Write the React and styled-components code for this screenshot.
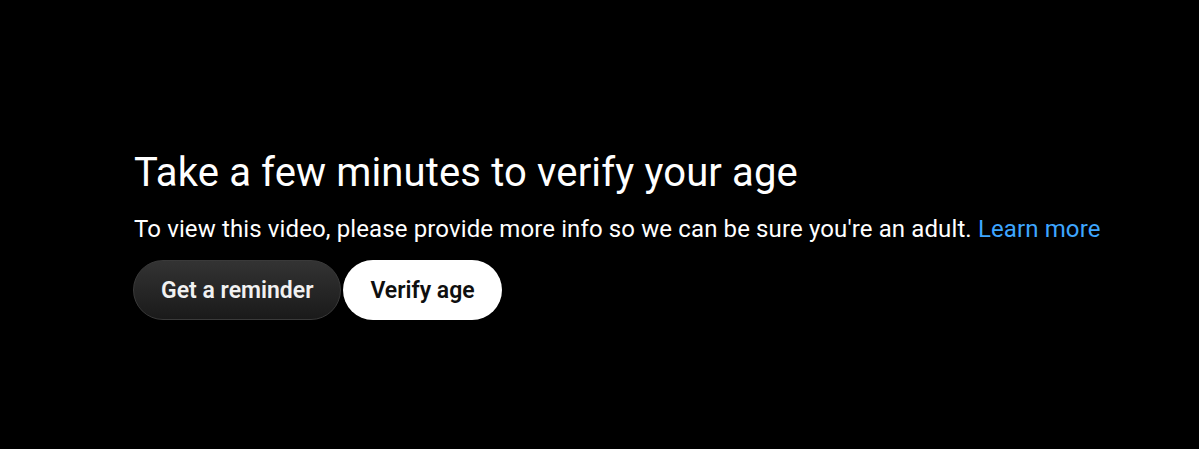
import styled, { createGlobalStyle } from "styled-components";

const GlobalStyle = createGlobalStyle`
  html, body {
    margin: 0;
    background: #000;
  }
  body {
    font-family: Roboto, "Liberation Sans", Arial, sans-serif;
  }
`;

const Screen = styled.div`
  width: 1199px;
  height: 449px;
  background: #000;
  display: flex;
  flex-direction: column;
  padding: 149px 0 0 134px;
  box-sizing: border-box;
`;

const Title = styled.h1`
  margin: 0 0 16px;
  font-size: 40px;
  font-weight: 400;
  line-height: 48px;
  letter-spacing: 0.14px;
  color: #fff;
`;

const Message = styled.p`
  margin: 0 0 15px;
  font-size: 24px;
  line-height: 32px;
  letter-spacing: 0.12px;
  color: #fff;
`;

const Link = styled.a`
  color: #3ea6ff;
  text-decoration: none;
`;

const Actions = styled.div`
  display: flex;
  gap: 2px;
  margin-left: -1px;
`;

const Button = styled.button`
  height: 60px;
  padding: 0 27px;
  border-radius: 30px;
  font-family: inherit;
  font-size: 23px;
  font-weight: 600;
  cursor: pointer;
  border: ${(p) => (p.$primary ? "none" : "1px solid #3a3a3a")};
  background: ${(p) =>
    p.$primary ? "#fff" : "linear-gradient(#333 0%, #1a1a1a 100%)"};
  color: ${(p) => (p.$primary ? "#0f0f0f" : "#f1f1f1")};
`;

export default function App() {
  return (
    <>
      <GlobalStyle />
      <Screen>
        <Title>Take a few minutes to verify your age</Title>
        <Message>
          To view this video, please provide more info so we can be sure you're
          an adult. <Link href="#">Learn more</Link>
        </Message>
        <Actions>
          <Button>Get a reminder</Button>
          <Button $primary>Verify age</Button>
        </Actions>
      </Screen>
    </>
  );
}
